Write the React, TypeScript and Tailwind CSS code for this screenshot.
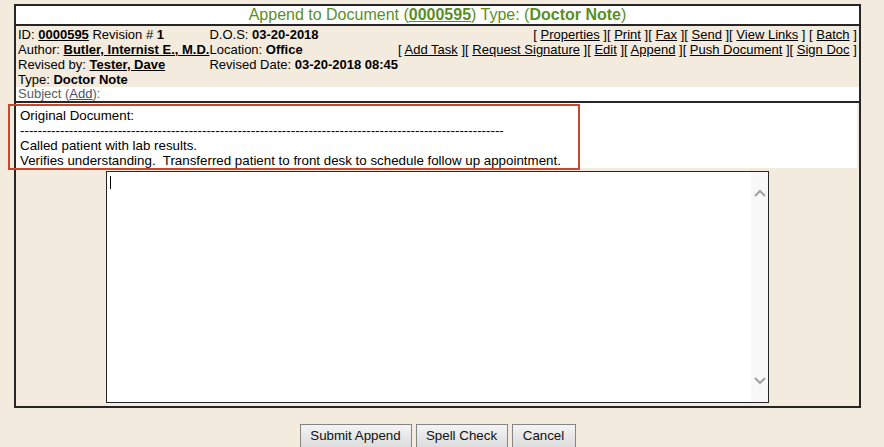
import React from "react";

const U = ({ children, bold }: { children: React.ReactNode; bold?: boolean }) => (
  <span className={`underline ${bold ? "font-bold" : ""}`}>{children}</span>
);

export default function App() {
  const dashes = "-".repeat(109);
  return (
    <div
      className="relative w-[884px] h-[447px] bg-[#f3ebde] text-[13.33px] text-black overflow-hidden"
      style={{ fontFamily: '"Liberation Sans", Arial, sans-serif' }}
    >
      <div className="ml-[14px] mt-[4px] w-[847px] h-[404px] border-2 border-[#262626] flex flex-col">
        {/* Title */}
        <div className="h-[18px] bg-white text-center text-[16px] leading-[18px] text-[#5a8f1f] border-b-2 border-[#262626] box-content">
          Append to Document (<span className="font-bold underline">0000595</span>) Type: (
          <span className="font-bold">Doctor Note</span>)
        </div>
        {/* Info */}
        <div className="pt-[1px] pl-[2px] pr-[3px] text-[13px] leading-[15px] grid grid-cols-[auto_auto_1fr] whitespace-nowrap">
          <div>
            ID: <U bold>0000595</U> Revision # <span className="font-bold">1</span>
          </div>
          <div>
            D.O.S: <span className="font-bold">03-20-2018</span>
          </div>
          <div className="text-right">
            [ <U>Properties</U> ][ <U>Print</U> ][ <U>Fax</U> ][ <U>Send</U> ][ <U>View Links</U> ] [ <U>Batch</U> ]
          </div>
          <div>
            Author: <U bold>Butler, Internist E., M.D.</U>
          </div>
          <div>
            Location: <span className="font-bold">Office</span>
          </div>
          <div className="text-right">
            [ <U>Add Task</U> ][ <U>Request Signature</U> ][ <U>Edit</U> ][ <U>Append</U> ][ <U>Push Document</U> ][ <U>Sign Doc</U> ]
          </div>
          <div>
            Revised by: <U bold>Tester, Dave</U>
          </div>
          <div>
            Revised Date: <span className="font-bold">03-20-2018 08:45</span>
          </div>
          <div />
          <div className="col-span-3">
            Type: <span className="font-bold">Doctor Note</span>
          </div>
        </div>
        <div className="h-[14px] leading-[14px] text-[13px] bg-white pl-[2px] text-[#5c5c5c] border-b-2 border-[#262626] box-content">
          Subject (<span className="underline text-[#4a4f70]">Add</span>):
        </div>
        {/* Original document */}
        <div className="h-[65px] bg-white mr-[2px] pt-[5px] pl-[4px] leading-[15px] whitespace-nowrap">
          <div>Original Document:</div>
          <div>{dashes}</div>
          <div>Called patient with lab results.</div>
          <div>Verifies understanding.&nbsp; Transferred patient to front desk to schedule follow up appointment.</div>
        </div>
        {/* Textarea */}
        <div className="flex-1 flex justify-center pt-[3px] pb-[3px]">
          <div className="relative w-[663px] h-[232px] border border-[#262626] bg-white flex">
            <textarea
              className="flex-1 resize-none outline-none bg-white p-[2px] text-[13px] overflow-hidden"
              defaultValue=""
            />
            <div className="w-[17px] bg-[#f8f8f8] relative">
              <svg className="absolute left-[3px] top-[17px]" width="12" height="8" viewBox="0 0 12 8">
                <path d="M1 7 L6 2 L11 7" fill="none" stroke="#a3a3a3" strokeWidth="2.2" />
              </svg>
              <svg className="absolute left-[3px] bottom-[17px]" width="12" height="8" viewBox="0 0 12 8">
                <path d="M1 1 L6 6 L11 1" fill="none" stroke="#a3a3a3" strokeWidth="2.2" />
              </svg>
            </div>
            <div className="absolute left-[3px] top-[4px] w-[1px] h-[13px] bg-black" />
          </div>
        </div>
      </div>
      {/* Buttons */}
      <div className="ml-[14px] w-[847px] mt-[16px] flex justify-center gap-[4px]">
        <button className="w-[112px] h-[24px] border border-[#858585] bg-gradient-to-b from-[#f4f4f4] to-[#dcdcdc] text-[13.33px] text-[#111]">
          Submit Append
        </button>
        <button className="w-[92px] h-[24px] border border-[#858585] bg-gradient-to-b from-[#f4f4f4] to-[#dcdcdc] text-[13.33px] text-[#111]">
          Spell Check
        </button>
        <button className="w-[64px] h-[24px] border border-[#858585] bg-gradient-to-b from-[#f4f4f4] to-[#dcdcdc] text-[13.33px] text-[#111]">
          Cancel
        </button>
      </div>
      {/* Red annotation box */}
      <div className="absolute left-[8px] top-[104px] w-[572px] h-[66px] border-2 border-[#c44a2f]" />
    </div>
  );
}
